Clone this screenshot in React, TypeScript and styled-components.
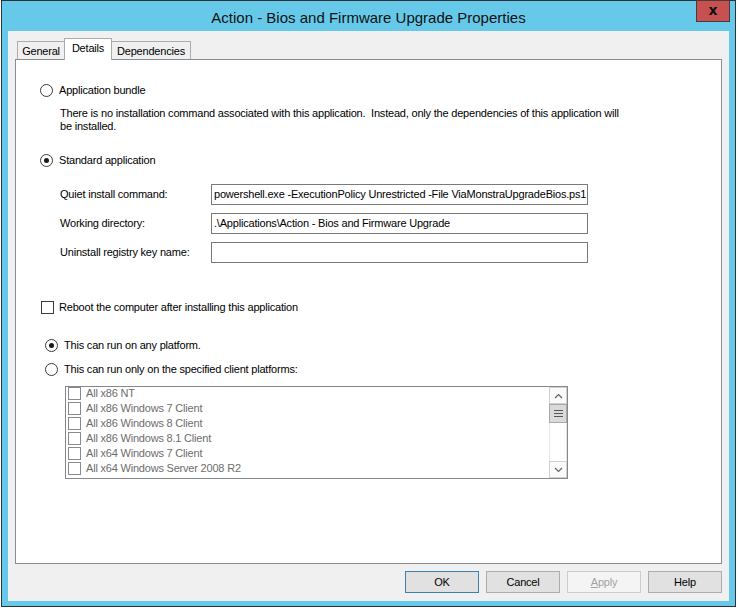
import React from "react";
import styled, { createGlobalStyle } from "styled-components";

const Global = createGlobalStyle`
  html, body { margin: 0; padding: 0; background: #ffffff; }
  body { font-family: "Liberation Sans", Arial, sans-serif; }
  * { box-sizing: border-box; }
`;

const Window = styled.div`
  margin-left: 1px;
  width: 735px;
  height: 607px;
  border: 1px solid #2e3236;
  background: #66c9ea;
  display: flex;
  flex-direction: column;
`;

const TitleBar = styled.div`
  height: 30px;
  display: grid;
  grid-template-columns: 1fr auto 1fr;
  align-items: center;
`;

const Title = styled.div`
  grid-column: 2;
  font-size: 15px;
  color: #111;
  padding-top: 2px;
`;

const CloseButton = styled.div`
  grid-column: 3;
  justify-self: end;
  align-self: start;
  margin-top: -1px;
  margin-right: 5px;
  width: 34px;
  height: 22px;
  background: #c75050;
  border: 1px solid #4a3a3a;
  display: flex;
  align-items: center;
  justify-content: center;
  color: #101010;
  font-family: "DejaVu Sans", sans-serif;
  font-weight: bold;
  font-size: 14px;
  line-height: 1;
  padding-bottom: 3px;
`;

const Client = styled.div`
  flex: 1;
  margin: 0 6px 5px 6px;
  background: #f0f0f0;
  display: flex;
  flex-direction: column;
  padding: 7px 7px 8px 7px;
  font-size: 11px;
  letter-spacing: -0.2px;
  color: #000;
`;

const TabStrip = styled.div`
  height: 21px;
  display: flex;
  align-items: flex-end;
  padding-left: 2px;
`;

const Tab = styled.div<{ $active?: boolean; $w: number }>`
  position: relative;
  z-index: ${(p) => (p.$active ? 1 : 0)};
  width: ${(p) => p.$w}px;
  height: ${(p) => (p.$active ? 22 : 18)}px;
  margin-bottom: ${(p) => (p.$active ? -1 : 0)}px;
  margin-right: -1px;
  border: 1px solid #acacac;
  border-bottom: none;
  background: ${(p) => (p.$active ? "#ffffff" : "#f0f0f0")};
  display: flex;
  justify-content: center;
  padding-top: 3px;
  line-height: 13px;
`;

const Panel = styled.div`
  height: 505px;
  border: 1px solid #898c95;
  background: #ffffff;
  display: flex;
  flex-direction: column;
  align-items: flex-start;
  padding-left: 24px;
`;

const Row = styled.div<{ $top: number; $left?: number; $gap?: number }>`
  display: flex;
  align-items: center;
  height: 16px;
  margin-top: ${(p) => p.$top}px;
  margin-left: ${(p) => p.$left ?? 0}px;
  gap: ${(p) => p.$gap ?? 6}px;
  white-space: nowrap;
`;

const RadioCircle = styled.span<{ $checked?: boolean }>`
  width: 13px;
  height: 13px;
  border-radius: 50%;
  border: 1px solid #3a3a3a;
  background: #fff;
  display: inline-flex;
  align-items: center;
  justify-content: center;
  flex: none;
  &::after {
    content: "";
    display: ${(p) => (p.$checked ? "block" : "none")};
    width: 5px;
    height: 5px;
    border-radius: 50%;
    background: #1a1a1a;
  }
`;

const CheckBox = styled.span<{ $muted?: boolean }>`
  width: 13px;
  height: 13px;
  border: 1px solid ${(p) => (p.$muted ? "#8a8a8a" : "#3a3a3a")};
  background: #fff;
  flex: none;
`;

const Description = styled.div`
  margin-top: 9px;
  margin-left: 20px;
  line-height: 13px;
  white-space: pre;
`;

const FieldRow = styled.div<{ $top: number }>`
  display: flex;
  align-items: center;
  margin-top: ${(p) => p.$top}px;
  margin-left: 20px;
`;

const FieldLabel = styled.div`
  width: 151px;
  padding-bottom: 2px;
`;

const TextBox = styled.div`
  width: 377px;
  height: 21px;
  border: 1px solid #7a7a7a;
  background: #fff;
  padding: 0 2px;
  line-height: 19px;
  overflow: hidden;
  white-space: nowrap;
`;

const ListBox = styled.div`
  margin-top: 9px;
  margin-left: 25px;
  width: 503px;
  height: 93px;
  border: 1px solid #828790;
  background: #fff;
  display: flex;
`;

const ListItems = styled.div`
  flex: 1;
  display: flex;
  flex-direction: column;
  padding-left: 2px;
  overflow: hidden;
`;

const ListItem = styled.div`
  height: 15px;
  flex: none;
  display: flex;
  align-items: flex-start;
  gap: 5px;
  line-height: 13px;
  color: #6d6d6d;
  white-space: nowrap;
`;

const ScrollBar = styled.div`
  width: 18px;
  display: flex;
  flex-direction: column;
  background: #ffffff;
`;

const ScrollButton = styled.div`
  height: 17px;
  border: 1px solid #cfcfcf;
  background: #fafafa;
  display: flex;
  align-items: center;
  justify-content: center;
`;

const Thumb = styled.div`
  height: 19px;
  border: 1px solid #a9a9a9;
  background: #dadada;
  display: flex;
  flex-direction: column;
  align-items: center;
  justify-content: center;
  gap: 2px;
`;

const Grip = styled.span`
  width: 9px;
  height: 1px;
  background: #555;
`;

const Track = styled.div`
  flex: 1;
  border-left: 1px solid #e6e6e6;
  border-right: 1px solid #e6e6e6;
`;

const ButtonRow = styled.div`
  margin-top: 7px;
  display: flex;
  justify-content: flex-end;
  gap: 7px;
`;

const Button = styled.div<{ $default?: boolean; $disabled?: boolean }>`
  width: 74px;
  height: 22px;
  border: 1px solid
    ${(p) => (p.$default ? "#3c7fb1" : p.$disabled ? "#cccccc" : "#adadad")};
  background: ${(p) => (p.$disabled ? "#f4f4f4" : "#e1e1e1")};
  color: ${(p) => (p.$disabled ? "#a3a3a3" : "#000")};
  display: flex;
  align-items: center;
  justify-content: center;
  padding-bottom: 1px;
  u {
    text-decoration: underline;
  }
`;

const Chevron = ({ up }: { up?: boolean }) => (
  <svg width="9" height="6" viewBox="0 0 9 6">
    <path
      d={up ? "M1 5 L4.5 1.5 L8 5" : "M1 1 L4.5 4.5 L8 1"}
      fill="none"
      stroke="#606060"
      strokeWidth="1.2"
    />
  </svg>
);

const platforms = [
  "All x86 NT",
  "All x86 Windows 7 Client",
  "All x86 Windows 8 Client",
  "All x86 Windows 8.1 Client",
  "All x64 Windows 7 Client",
  "All x64 Windows Server 2008 R2",
];

export default function App() {
  return (
    <>
      <Global />
      <Window>
        <TitleBar>
          <Title>Action - Bios and Firmware Upgrade Properties</Title>
          <CloseButton>x</CloseButton>
        </TitleBar>
        <Client>
          <TabStrip>
            <Tab $w={48}>General</Tab>
            <Tab $w={48} $active>
              Details
            </Tab>
            <Tab $w={80}>Dependencies</Tab>
          </TabStrip>
          <Panel>
            <Row $top={22}>
              <RadioCircle />
              <span>Application bundle</span>
            </Row>
            <Description>
              {"There is no installation command associated with this application.  Instead, only the dependencies of this application will"}
              <br />
              {"be installed."}
            </Description>
            <Row $top={19}>
              <RadioCircle $checked />
              <span>Standard application</span>
            </Row>
            <FieldRow $top={16}>
              <FieldLabel>Quiet install command:</FieldLabel>
              <TextBox>
                powershell.exe -ExecutionPolicy Unrestricted -File ViaMonstraUpgradeBios.ps1
              </TextBox>
            </FieldRow>
            <FieldRow $top={8}>
              <FieldLabel>Working directory:</FieldLabel>
              <TextBox>.\Applications\Action - Bios and Firmware Upgrade</TextBox>
            </FieldRow>
            <FieldRow $top={8}>
              <FieldLabel>Uninstall registry key name:</FieldLabel>
              <TextBox />
            </FieldRow>
            <Row $top={36} $left={1} $gap={5}>
              <CheckBox />
              <span>Reboot the computer after installing this application</span>
            </Row>
            <Row $top={22} $left={5}>
              <RadioCircle $checked />
              <span>This can run on any platform.</span>
            </Row>
            <Row $top={8} $left={5}>
              <RadioCircle />
              <span>This can run only on the specified client platforms:</span>
            </Row>
            <ListBox>
              <ListItems>
                {platforms.map((p) => (
                  <ListItem key={p}>
                    <CheckBox $muted />
                    <span>{p}</span>
                  </ListItem>
                ))}
              </ListItems>
              <ScrollBar>
                <ScrollButton>
                  <Chevron up />
                </ScrollButton>
                <Thumb>
                  <Grip />
                  <Grip />
                  <Grip />
                </Thumb>
                <Track />
                <ScrollButton>
                  <Chevron />
                </ScrollButton>
              </ScrollBar>
            </ListBox>
          </Panel>
          <ButtonRow>
            <Button $default>OK</Button>
            <Button>Cancel</Button>
            <Button $disabled>
              <span>
                <u>A</u>pply
              </span>
            </Button>
            <Button>Help</Button>
          </ButtonRow>
        </Client>
      </Window>
    </>
  );
}
